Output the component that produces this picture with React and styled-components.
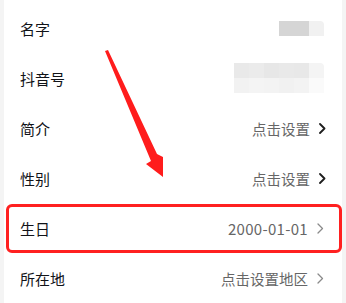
import styled, { createGlobalStyle } from 'styled-components';

const GlobalStyle = createGlobalStyle`
	html, body {
		margin: 0;
		padding: 0;
		background: #f4f4f4;
	}
	body {
		font-family: 'Noto Sans CJK SC', 'Noto Sans', sans-serif;
	}
`;

const rows = [
	{ label: '名字', mosaic: 'name' },
	{ label: '抖音号', mosaic: 'id' },
	{ label: '简介', value: '点击设置', strong: true },
	{ label: '性别', value: '点击设置', strong: true },
	{ label: '生日', value: '2000-01-01', highlight: true, date: true },
	{ label: '所在地', value: '点击设置地区' },
];

// 打码色块
const mosaics = {
	name: { cols: 3, cells: ['#d5d5d5', '#d5d5d5', '#f1f1f1'] },
	id: {
		cols: 6,
		cells: [
			'#e9e9e9', '#ebebeb', '#e7e7e7', '#e9e9e9', '#e8e8e8', '#f4f4f4',
			'#f2f2f2', '#f4f4f4', '#f3f3f3', '#f1f1f1', '#f3f3f3', '#fafafa',
		],
	},
};

const Chevron = ({ strong }) => (
	<ChevronIcon viewBox='0 0 7 11' $strong={strong}>
		<polyline points='1,1 5.5,5.5 1,10' />
	</ChevronIcon>
);

const App = () => {
	return (
		<Page>
			<GlobalStyle />
			<Panel>
				{rows.map((row) => (
					<Row key={row.label} $highlight={row.highlight}>
						<Label>{row.label}</Label>
						{row.mosaic ? (
							<Mosaic $cols={mosaics[row.mosaic].cols}>
								{mosaics[row.mosaic].cells.map((c, i) => (
									<Cell key={i} $color={c} />
								))}
							</Mosaic>
						) : (
							<ValueWrap>
								<Value $date={row.date}>{row.value}</Value>
								<Chevron strong={row.strong} />
							</ValueWrap>
						)}
					</Row>
				))}
				<Arrow viewBox='0 0 346 303'>
					<polygon points='105,51 108,50 157,154 163,157 163,177 146,164 151,161' />
				</Arrow>
			</Panel>
		</Page>
	);
};

export default App;

const Page = styled.div`
	width: 346px;
	height: 303px;
	padding: 0 4px;
	box-sizing: border-box;
	overflow: hidden;
`;
const Panel = styled.div`
	position: relative;
	background: #fff;
	height: 100%;
	padding-top: 3px;
	box-sizing: border-box;
`;
const Row = styled.div`
	position: relative;
	height: 50px;
	display: flex;
	align-items: center;
	justify-content: space-between;
	padding: 0 16px;
	&::after {
		content: '';
		display: ${(p) => (p.$highlight ? 'block' : 'none')};
		position: absolute;
		top: 1px;
		bottom: 0;
		left: 2px;
		right: 0;
		border: 3px solid #ff2020;
		border-radius: 6px;
	}
`;
const Label = styled.span`
	font-size: 15px;
	color: #111318;
`;
const ValueWrap = styled.div`
	display: flex;
	align-items: center;
	gap: 9px;
`;
const Value = styled.span`
	font-size: ${(p) => (p.$date ? '15px' : '14.5px')};
	color: #666;
	letter-spacing: ${(p) => (p.$date ? '0.3px' : '0')};
`;
const ChevronIcon = styled.svg`
	width: 7px;
	height: 11px;
	margin-right: ${(p) => (p.$strong ? '0' : '2px')};
	polyline {
		fill: none;
		stroke: ${(p) => (p.$strong ? '#1e1e1e' : '#8a8a8a')};
		stroke-width: ${(p) => (p.$strong ? '1.8' : '1.3')};
		stroke-linecap: round;
		stroke-linejoin: round;
	}
`;
const Mosaic = styled.div`
	display: grid;
	grid-template-columns: repeat(${(p) => p.$cols}, 15px);
	grid-auto-rows: 15px;
	margin-right: 2px;
	border-top-right-radius: 4px;
	overflow: hidden;
`;
const Cell = styled.div`
	background: ${(p) => p.$color};
`;
const Arrow = styled.svg`
	position: absolute;
	left: -4px;
	top: 0;
	width: 346px;
	height: 303px;
	pointer-events: none;
	polygon {
		fill: #ff1c1c;
	}
`;
